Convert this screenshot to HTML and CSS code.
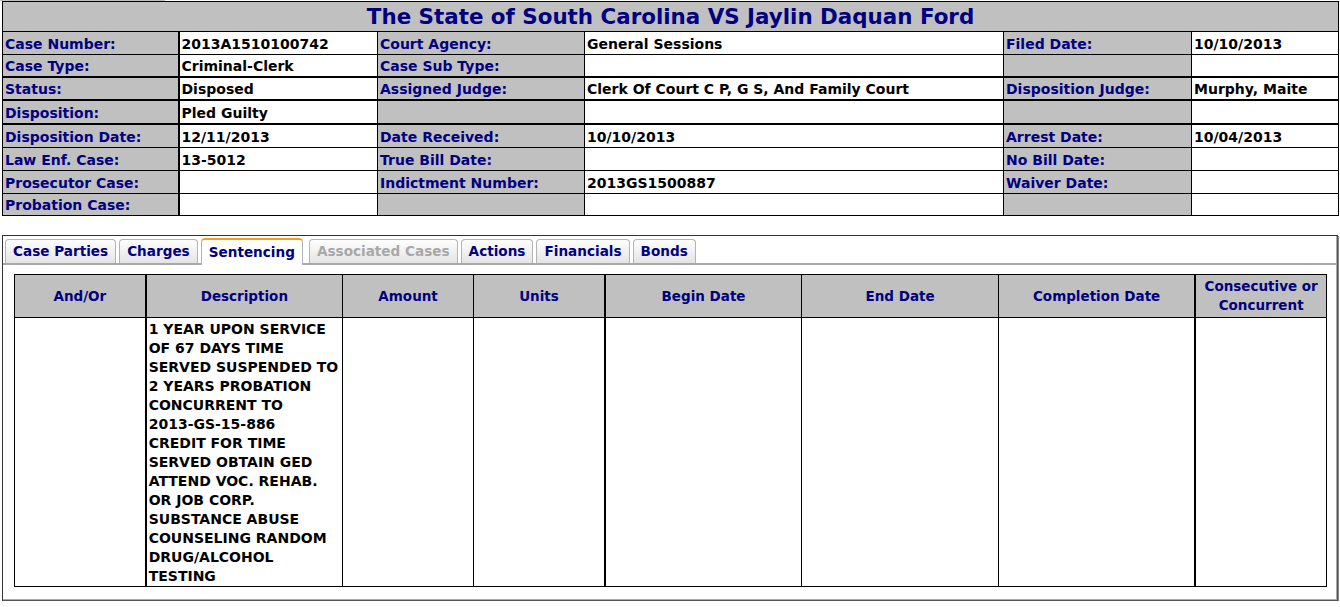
FILE: index.html
```html
<!DOCTYPE html>
<html>
<head>
<meta charset="utf-8">
<link rel="stylesheet" href="styles.css">
</head>
<body>
<div class="stub"></div>
<table class="case">
  <colgroup>
    <col class="c1"><col class="c2"><col class="c3"><col class="c4"><col class="c5"><col class="c6">
  </colgroup>
  <tr class="title-row"><th colspan="6" class="title">The State of South Carolina VS Jaylin Daquan Ford</th></tr>
  <tr>
    <td class="lbl">Case Number:</td><td class="val">2013A1510100742</td>
    <td class="lbl">Court Agency:</td><td class="val">General Sessions</td>
    <td class="lbl">Filed Date:</td><td class="val">10/10/2013</td>
  </tr>
  <tr class="thick">
    <td class="lbl">Case Type:</td><td class="val">Criminal-Clerk</td>
    <td class="lbl">Case Sub Type:</td><td class="val"></td>
    <td class="lbl"></td><td class="val"></td>
  </tr>
  <tr class="thick">
    <td class="lbl">Status:</td><td class="val">Disposed</td>
    <td class="lbl">Assigned Judge:</td><td class="val">Clerk Of Court C P, G S, And Family Court</td>
    <td class="lbl">Disposition Judge:</td><td class="val">Murphy, Maite</td>
  </tr>
  <tr class="thick last-thick">
    <td class="lbl">Disposition:</td><td class="val">Pled Guilty</td>
    <td class="lbl"></td><td class="val"></td>
    <td class="lbl"></td><td class="val"></td>
  </tr>
  <tr>
    <td class="lbl">Disposition Date:</td><td class="val">12/11/2013</td>
    <td class="lbl">Date Received:</td><td class="val">10/10/2013</td>
    <td class="lbl">Arrest Date:</td><td class="val">10/04/2013</td>
  </tr>
  <tr>
    <td class="lbl">Law Enf. Case:</td><td class="val">13-5012</td>
    <td class="lbl">True Bill Date:</td><td class="val"></td>
    <td class="lbl">No Bill Date:</td><td class="val"></td>
  </tr>
  <tr>
    <td class="lbl">Prosecutor Case:</td><td class="val"></td>
    <td class="lbl">Indictment Number:</td><td class="val">2013GS1500887</td>
    <td class="lbl">Waiver Date:</td><td class="val"></td>
  </tr>
  <tr class="last">
    <td class="lbl">Probation Case:</td><td class="val"></td>
    <td class="lbl"></td><td class="val"></td>
    <td class="lbl"></td><td class="val"></td>
  </tr>
</table>

<div class="panel">
  <div class="tabs">
    <span class="tab">Case Parties</span>
    <span class="tab">Charges</span>
    <span class="tab active">Sentencing</span>
    <span class="tab disabled">Associated Cases</span>
    <span class="tab">Actions</span>
    <span class="tab">Financials</span>
    <span class="tab">Bonds</span>
  </div>
  <table class="sent">
    <colgroup>
      <col class="w10"><col class="w15"><col class="w10"><col class="w10"><col class="w15"><col class="w15"><col class="w15"><col class="w10">
    </colgroup>
    <tr class="head">
      <th>And/Or</th>
      <th class="tl">Description</th>
      <th>Amount</th>
      <th>Units</th>
      <th class="tl">Begin Date</th>
      <th>End Date</th>
      <th>Completion Date</th>
      <th class="tl">Consecutive or Concurrent</th>
    </tr>
    <tr class="body">
      <td></td>
      <td class="desc tl">1 YEAR UPON SERVICE OF 67 DAYS TIME SERVED SUSPENDED TO 2 YEARS PROBATION CONCURRENT TO <span class="nw">2013-GS-15-886</span><br>CREDIT FOR TIME SERVED OBTAIN GED ATTEND VOC. REHAB. OR JOB CORP. SUBSTANCE ABUSE COUNSELING RANDOM DRUG/ALCOHOL TESTING</td>
      <td></td>
      <td></td>
      <td class="tl"></td>
      <td></td>
      <td></td>
      <td class="tl"></td>
    </tr>
  </table>
</div>
</body>
</html>
```

FILE: styles.css
```css
html, body {
  margin: 0;
  padding: 0;
  background: #fff;
}
body {
  font-family: "DejaVu Sans", Verdana, sans-serif;
  font-weight: bold;
  font-size: 13.6px;
  color: #000;
}
.stub {
  width: 165px;
  height: 1px;
  background: #c0c0c0;
}
.case {
  margin-left: 2px;
  width: 1336px;
  border-collapse: collapse;
  table-layout: fixed;
  border: 1px solid #000;
}
.c1 { width: 176px; }
.c2 { width: 199px; }
.c3 { width: 207px; }
.c4 { width: 419px; }
.c5 { width: 188px; }
.c6 { width: 147px; }
.case td, .case th {
  border: 1px solid #000;
  padding: 1px 2px 0 2px;
  height: 21px;
  white-space: nowrap;
  overflow: hidden;
  text-align: left;
  font-size: 14px;
}
.case .title {
  background: #c0c0c0;
  color: #000080;
  font-size: 21.4px;
  text-align: center;
  height: 29px;
  padding: 0 2px;
}
.case .lbl {
  background: #c0c0c0;
  color: #000080;
}
.case .val {
  background: #fff;
  color: #000;
}
.case td:first-child {
  border-right-width: 2px;
}
.case tr.thick td {
  border-bottom-width: 2px;
  height: 20px;
}
.case tr.last-thick td {
  height: 21px;
}
.case tr.last td {
  height: 20px;
}

.panel {
  margin: 19px 2px 0 2px;
  border: 1px solid #333;
  border-right-color: #555;
  border-bottom-color: #555;
  box-shadow: inset -1px -1px 0 #aaa, 1px 1px 0 #888;
  padding: 1px 0 13px 0;
}
.tabs {
  display: flex;
  align-items: flex-end;
  gap: 3px;
  padding-left: 2px;
  border-bottom: 2px solid #a8a8a8;
  height: 26px;
}
.tab {
  display: block;
  height: 23px;
  line-height: 23px;
  padding: 0 7px;
  border: 1px solid #b4b4b4;
  border-bottom: none;
  border-radius: 4px 4px 0 0;
  background: linear-gradient(#fefefe, #e4e4e4);
  color: #000080;
}
.tab.active {
  background: #fff;
  border-top: 2px solid #f0a020;
  height: 25px;
  margin-bottom: -2px;
  line-height: 25px;
}
.tab.disabled {
  color: #a8a8a8;
  margin-left: 3px;
}
.sent {
  margin: 9px 10px 0 11px;
  width: 1313px;
  border-collapse: collapse;
  table-layout: fixed;
  border: 1px solid #000;
}
.w10 { width: 10%; }
.w15 { width: 15%; }
.sent th, .sent td {
  border: 1px solid #000;
  padding: 0 2px;
}
.sent .tl {
  border-left-width: 2px;
}
.sent tr.head th {
  background: #c0c0c0;
  color: #000080;
  height: 42px;
  line-height: 19px;
  font-size: 13.5px;
  text-align: center;
  vertical-align: middle;
}
.sent tr.body td {
  height: 266px;
  vertical-align: top;
  line-height: 19px;
  font-size: 14px;
}
.sent td.desc {
  padding: 2px 2px 0 2px;
  height: 265px;
}
.nw {
  white-space: nowrap;
}
```
